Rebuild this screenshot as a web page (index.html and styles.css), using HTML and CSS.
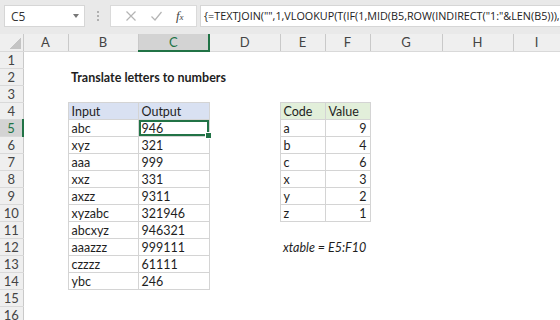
FILE: index.html
```html
<!DOCTYPE html>
<html lang="en">
<head>
    <meta charset="UTF-8">
    <title>Translate letters to numbers</title>
    <link rel="stylesheet" href="styles.css">
</head>
<body>
    <div class="toolbar">
        <div class="namebox"><span>C5</span><span class="caret"></span></div>
        <div class="grip"><i></i><i></i><i></i></div>
        <div class="fxbox">
            <svg class="btn" width="12" height="12" viewBox="0 0 12 12"><path d="M1.5 1.5 L10.5 10.5 M10.5 1.5 L1.5 10.5" stroke="#b4b4b4" stroke-width="1.2" fill="none"/></svg>
            <svg class="btn" width="13" height="12" viewBox="0 0 13 12"><path d="M1.5 6.5 L5 10 L11.5 2" stroke="#b4b4b4" stroke-width="1.2" fill="none"/></svg>
            <span class="fx">f<small>x</small></span>
        </div>
        <div class="formula">{=TEXTJOIN("",1,VLOOKUP(T(IF(1,MID(B5,ROW(INDIRECT("1:"&amp;LEN(B5))),1))),xtable,2,0))}</div>
    </div>

    <table class="sheet">
        <colgroup>
            <col class="w-rh"><col class="w-a"><col class="w-b"><col class="w-c"><col class="w-d">
            <col class="w-e"><col class="w-f"><col class="w-g"><col class="w-h"><col class="w-i">
        </colgroup>
        <tr class="colhead">
            <th class="corner"></th><th>A</th><th>B</th><th class="sel">C</th><th>D</th><th>E</th><th>F</th><th>G</th><th>H</th><th>I</th>
        </tr>
        <tr><th>1</th><td></td><td></td><td></td><td></td><td></td><td></td><td></td><td></td><td></td></tr>
        <tr><th>2</th><td></td><td class="title">Translate letters to numbers</td><td></td><td></td><td></td><td></td><td></td><td></td><td></td></tr>
        <tr><th>3</th><td></td><td></td><td></td><td></td><td></td><td></td><td></td><td></td><td></td></tr>
        <tr><th>4</th><td></td><td class="box hd-blue">Input</td><td class="box hd-blue">Output</td><td></td><td class="box hd-green">Code</td><td class="box hd-green">Value</td><td></td><td></td><td></td></tr>
        <tr><th class="sel">5</th><td></td><td class="box">abc</td><td class="box active">946<span class="handle"></span></td><td></td><td class="box">a</td><td class="box num">9</td><td></td><td></td><td></td></tr>
        <tr><th>6</th><td></td><td class="box">xyz</td><td class="box">321</td><td></td><td class="box">b</td><td class="box num">4</td><td></td><td></td><td></td></tr>
        <tr><th>7</th><td></td><td class="box">aaa</td><td class="box">999</td><td></td><td class="box">c</td><td class="box num">6</td><td></td><td></td><td></td></tr>
        <tr><th>8</th><td></td><td class="box">xxz</td><td class="box">331</td><td></td><td class="box">x</td><td class="box num">3</td><td></td><td></td><td></td></tr>
        <tr><th>9</th><td></td><td class="box">axzz</td><td class="box">9311</td><td></td><td class="box">y</td><td class="box num">2</td><td></td><td></td><td></td></tr>
        <tr><th>10</th><td></td><td class="box">xyzabc</td><td class="box">321946</td><td></td><td class="box">z</td><td class="box num">1</td><td></td><td></td><td></td></tr>
        <tr><th>11</th><td></td><td class="box">abcxyz</td><td class="box">946321</td><td></td><td></td><td></td><td></td><td></td><td></td></tr>
        <tr><th>12</th><td></td><td class="box">aaazzz</td><td class="box">999111</td><td></td><td class="note">xtable = E5:F10</td><td></td><td></td><td></td><td></td></tr>
        <tr><th>13</th><td></td><td class="box">czzzz</td><td class="box">61111</td><td></td><td></td><td></td><td></td><td></td><td></td></tr>
        <tr><th>14</th><td></td><td class="box">ybc</td><td class="box">246</td><td></td><td></td><td></td><td></td><td></td><td></td></tr>
        <tr><th>15</th><td></td><td></td><td></td><td></td><td></td><td></td><td></td><td></td><td></td></tr>
        <tr><th>16</th><td></td><td></td><td></td><td></td><td></td><td></td><td></td><td></td><td></td></tr>
    </table>
</body>
</html>
```

FILE: styles.css
```css
* {
    box-sizing: border-box;
}
body {
    margin: 0;
    width: 560px;
    height: 320px;
    overflow: hidden;
    background: #fff;
    font-family: Lato, "Liberation Sans", sans-serif;
    color: #1e1e1e;
}

/* formula bar */
.toolbar {
    display: flex;
    align-items: flex-start;
    height: 34px;
    padding: 5px 0 0 4px;
    background: #e9e9e9;
}
.namebox {
    width: 81px;
    height: 22px;
    display: flex;
    align-items: center;
    justify-content: space-between;
    padding: 0 5px 0 6px;
    background: #fff;
    border: 1px solid #d6d6d6;
    font: 12px "Open Sans", sans-serif;
    color: #333;
}
.caret {
    border-left: 3.5px solid transparent;
    border-right: 3.5px solid transparent;
    border-top: 4px solid #777;
}
.grip {
    width: 25px;
    height: 22px;
    display: flex;
    flex-direction: column;
    align-items: center;
    justify-content: center;
    gap: 2px;
}
.grip i {
    width: 2px;
    height: 2px;
    background: #b0b0b0;
}
.fxbox {
    width: 87px;
    height: 22px;
    display: flex;
    align-items: center;
    justify-content: space-around;
    padding: 0 6px 0 8px;
    background: #fff;
    border: 1px solid #dadada;
}
.fx {
    font: italic 13px "Liberation Serif", serif;
    color: #444;
}
.fx small {
    font-size: 9px;
}
.formula {
    flex: 1;
    height: 22px;
    margin-left: 3px;
    padding: 0 0 0 3px;
    background: #fff;
    border: 1px solid #d6d6d6;
    border-right: none;
    font: 10.8px "Open Sans", sans-serif;
    line-height: 20px;
    color: #222;
    white-space: nowrap;
    overflow: hidden;
}

/* grid */
.sheet {
    border-collapse: collapse;
    table-layout: fixed;
    width: 560px;
    font-size: 12.5px;
}
.w-rh { width: 23px; }
.w-a { width: 45px; }
.w-b { width: 70px; }
.w-c { width: 71px; }
.w-d { width: 71px; }
.w-e { width: 45px; }
.w-f { width: 45px; }
.w-g { width: 72px; }
.w-h { width: 71px; }
.w-i { width: 47px; }

.sheet tr {
    height: 16.8px;
}
.sheet td {
    padding: 1px 3px 0;
    line-height: 15px;
    white-space: nowrap;
    overflow: visible;
}
.sheet th {
    padding: 0;
    font-size: 13px;
    font-weight: normal;
    color: #444;
    background: #efefef;
    text-align: center;
}
.sheet tr > th {
    border-bottom: 1px solid #d9d9d9;
    border-right: 1px solid #c9c9c9;
}
.colhead {
    height: 17px;
}
.colhead th {
    border-bottom: 1px solid #c9c9c9;
    border-right: 1px solid #d6d6d6;
    line-height: 16px;
}
.colhead .corner {
    background: #efefef linear-gradient(135deg, transparent 50%, #c4c4c4 50%) no-repeat 9px 4px / 12px 11px;
}
.sheet th.sel {
    background: #d3d3d3;
    color: #217346;
}
.colhead th.sel {
    border-bottom: 2px solid #217346;
}
.sheet tr > th.sel {
    border-right: 2px solid #217346;
}

.title {
    font-weight: bold;
}
.box {
    border: 1px solid #d4d4d4;
}
.hd-blue {
    background: #d9e1f2;
}
.hd-green {
    background: #e2efda;
}
.num {
    text-align: right;
}
.note {
    font-style: italic;
}
.active {
    position: relative;
    box-shadow: inset 0 0 0 2px #217346;
}
.handle {
    position: absolute;
    right: -3px;
    bottom: -3px;
    width: 5px;
    height: 5px;
    background: #217346;
    border: 1px solid #fff;
    box-sizing: content-box;
}
```
